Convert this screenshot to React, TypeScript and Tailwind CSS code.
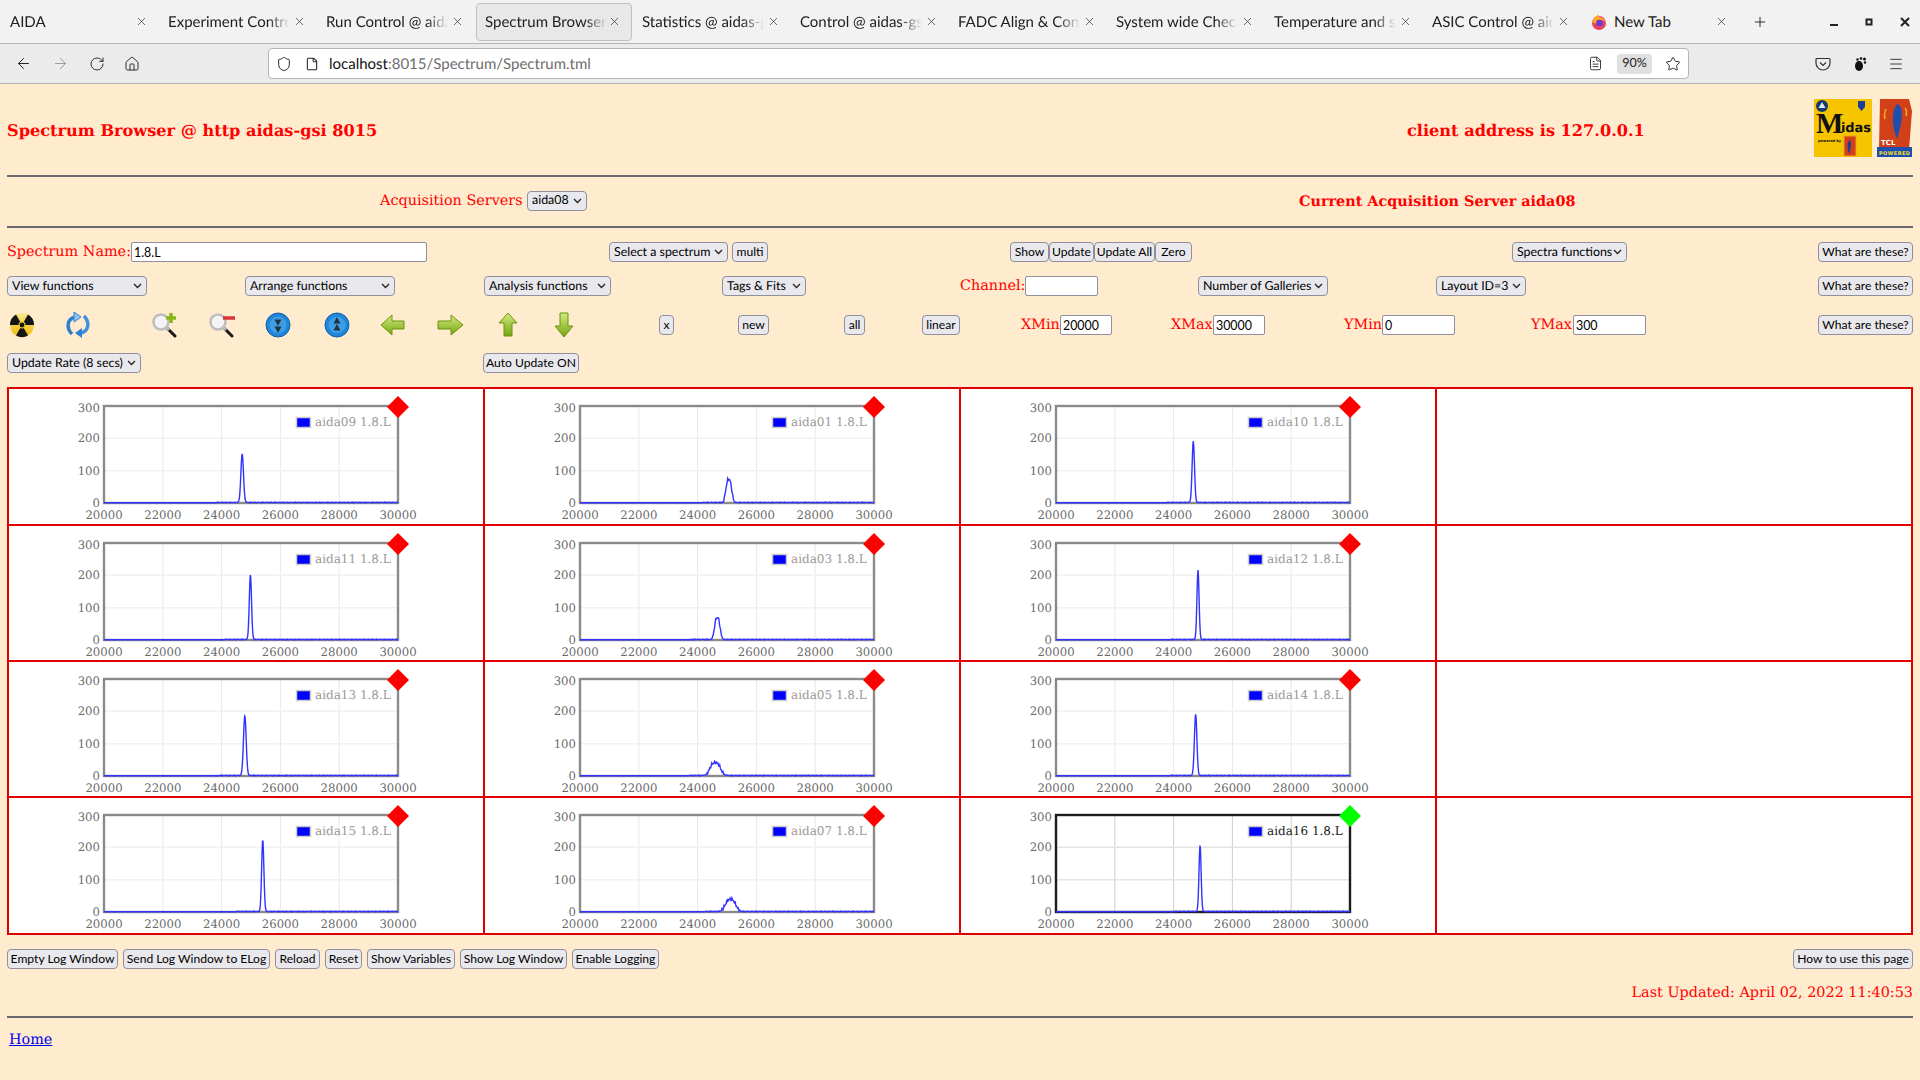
import { ReactNode } from 'react';
import { ArrowLeft, ArrowRight, RotateCw, Home, Shield, File, FileText, Star, Menu, Plus, X } from 'lucide-react';

const uiFont = 'font-["Lato",sans-serif]';
const pageFont = 'font-["DejaVu_Serif",serif]';
const label = 'shrink-0 pt-[2px] font-["DejaVu_Serif",serif] text-[14.4px] whitespace-nowrap text-[#ff0000]';

interface CtlProps {
    w: string;
    children: ReactNode;
}

function Btn({ w, children }: CtlProps) {
    return (
        <button className={`${w} block h-[20px] shrink-0 rounded-[4px] border border-[#8f8f9d] bg-[#e9e9ed] text-center text-[12.1px] leading-none whitespace-nowrap text-black`}>
            {children}
        </button>
    );
}

function Sel({ w, children }: CtlProps) {
    return (
        <div className={`${w} flex h-[20px] shrink-0 items-center justify-between rounded-[4px] border border-[#8f8f9d] bg-[#e9e9ed] pl-[4px] pr-[4px] text-[12.4px] whitespace-nowrap text-black`}>
            <span>{children}</span>
            <svg width="9" height="6" viewBox="0 0 9 6" fill="none" stroke="#222" strokeWidth="1.3">
                <path d="M1 1l3.500 3.500L8 1" />
            </svg>
        </div>
    );
}

function Field({ w, value }: { w: string; value?: string }) {
    return (
        <input
            type="text"
            readOnly
            value={value ?? ''}
            className={`${w} h-[20px] shrink-0 rounded-[2px] border border-[#8f8f9d] bg-white pl-[2px] text-[12.4px] text-black outline-none`}
        />
    );
}

function Rule() {
    return <div className="h-[2px] bg-[#6a6a6a]" />;
}

const tabs = [
    'AIDA',
    'Experiment Control @ aidas-gsi',
    'Run Control @ aidas-gsi',
    'Spectrum Browser @ aidas-gsi',
    'Statistics @ aidas-gsi',
    'Control @ aidas-gsi',
    'FADC Align & Control',
    'System wide Checks',
    'Temperature and status',
    'ASIC Control @ aidas-gsi',
];

function FirefoxIcon() {
    return (
        <svg width="16" height="16" viewBox="0 0 16 16">
            <circle cx="8" cy="9" r="7" fill="#e8415f" />
            <path d="M1.500 8C2 4 5 1.500 8 1c-.5 1.500 1 2.500 3 3 2 .6 3.600 2.500 4 5-1-2-3-3-5-3-2.500 0-4 2-3.500 4-1.500-.5-4-1-5.500-2z" fill="#fda429" />
            <circle cx="8.500" cy="9" r="3.300" fill="#6e3bd1" />
        </svg>
    );
}

function TabBar() {
    return (
        <div className="flex h-[44px] items-center border-b border-[#b4b4b4] bg-[#f2f2f2] pl-[2px] text-[15px] text-[#202020]">
            {tabs.map((t, i) => (
                <div
                    key={i}
                    className={`mr-[2px] flex h-[38px] w-[156px] shrink-0 items-center justify-between rounded-[4px] pl-[8px] pr-[10px] ${i === 3 ? 'border border-[#c0c0c0] bg-[#e8e8e8]' : ''}`}
                >
                    <span className="w-[122px] overflow-hidden pt-[2px] whitespace-nowrap [mask-image:linear-gradient(to_right,black_82%,transparent)]">{t}</span>
                    <X size={13} strokeWidth={1.2} className="shrink-0" />
                </div>
            ))}
            <div className="flex h-[38px] w-[160px] shrink-0 items-center pl-[9px] pr-[14px]">
                <FirefoxIcon />
                <span className="ml-[7px] pt-[2px]">New Tab</span>
                <X size={13} strokeWidth={1.2} className="ml-auto" />
            </div>
            <Plus size={16} strokeWidth={1.4} className="ml-[10px]" />
            <svg width="10" height="10" viewBox="0 0 10 10" className="ml-[61px]"><path d="M1 8h8" stroke="#222" strokeWidth="2" /></svg>
            <svg width="10" height="10" viewBox="0 0 10 10" className="ml-[25px]"><rect x="2.500" y="2.500" width="5" height="5" fill="none" stroke="#222" strokeWidth="2" /></svg>
            <svg width="10" height="10" viewBox="0 0 10 10" className="ml-[26px]"><path d="M1 1l8 8M9 1l-8 8" stroke="#222" strokeWidth="2" /></svg>
        </div>
    );
}

function NavBar() {
    return (
        <div className="flex h-[40px] items-center border-b border-[#b4b4b4] bg-[#ebebeb] pl-[15px] text-[#222]">
            <ArrowLeft size={17} strokeWidth={1.4} />
            <ArrowRight size={17} strokeWidth={1.4} className="ml-[20px] text-[#9a9a9a]" />
            <RotateCw size={16} strokeWidth={1.4} className="ml-[20px]" />
            <Home size={16} strokeWidth={1.4} className="ml-[19px]" />
            <div className="ml-[128px] flex h-[31px] w-[1421px] shrink-0 items-center rounded-[4px] border border-[#b5b5b5] bg-white pl-[7px] text-[15px]">
                <Shield size={16} strokeWidth={1.5} />
                <File size={14} strokeWidth={1.8} className="ml-[13px]" />
                <span className="ml-[10px] pt-[2px] text-[#111]">localhost<span className="text-[#6d6d6d]">:8015/Spectrum/Spectrum.tml</span></span>
                <FileText size={15} strokeWidth={1.4} className="ml-auto" />
                <span className="ml-[14px] flex h-[20px] w-[35px] items-center justify-center rounded-[3px] bg-[#e0e0e0] text-[12.5px]">90%</span>
                <Star size={16} strokeWidth={1.4} className="ml-[13px] mr-[7px]" />
            </div>
            <svg width="16" height="16" viewBox="0 0 16 16" fill="none" stroke="#333" strokeWidth="1.2" className="ml-[126px]">
                <path d="M2 2.500h12a1 1 0 0 1 1 1V7a7 7 0 0 1-14 0V3.500a1 1 0 0 1 1-1z" />
                <path d="M5 6.500l3 3 3-3" />
            </svg>
            <svg width="16" height="16" viewBox="0 0 16 16" className="ml-[21px]" fill="#111">
                <ellipse cx="7" cy="10" rx="4" ry="5" />
                <circle cx="12.500" cy="3" r="1.500" />
                <circle cx="9" cy="2.500" r="1.300" />
                <circle cx="5.500" cy="3.500" r="1.200" />
                <circle cx="13" cy="6.500" r="1.200" />
            </svg>
            <Menu size={16} strokeWidth={1.3} className="ml-[20px]" />
        </div>
    );
}

function Radiation() {
    return (
        <svg width="26" height="26" viewBox="0 0 26 26">
            <defs>
                <linearGradient id="nuke" x1="0" y1="0" x2="0" y2="1">
                    <stop offset="0" stopColor="#f7e88a" />
                    <stop offset="1" stopColor="#f2b90c" />
                </linearGradient>
            </defs>
            <circle cx="13" cy="13" r="12" fill="url(#nuke)" />
            <path d="M13 13L7 2.600A12 12 0 0 0 1 13zM13 13L25 13A12 12 0 0 0 19 2.600zM13 13L7 23.400A12 12 0 0 0 19 23.400z" fill="#151515" />
            <circle cx="13" cy="13" r="3.500" fill="#f2c81c" />
            <circle cx="13" cy="13" r="2.400" fill="#151515" />
        </svg>
    );
}

function Refresh() {
    return (
        <svg width="26" height="26" viewBox="0 0 26 26" fill="none">
            <path d="M7 22C1 16 2 7 10 5" stroke="#2f7fd0" strokeWidth="3.500" />
            <path d="M19 4c6 6 5 15-3 17" stroke="#3f8fe0" strokeWidth="3.500" />
            <path d="M9 0l7 5-7 5z" fill="#8fc4f2" stroke="#2f7fd0" />
            <path d="M17 16l-7 5 7 5z" fill="#2f7fd0" />
        </svg>
    );
}

function Magnifier({ plus }: { plus: boolean }) {
    return (
        <svg width="28" height="26" viewBox="0 0 28 26" fill="none">
            <path d="M15 15l9 9" stroke="#1a1a1a" strokeWidth="3" strokeLinecap="round" />
            <path d="M15 15l3 3" stroke="#bbb" strokeWidth="3" />
            <circle cx="10" cy="10" r="7.500" fill="#f4f4f4" stroke="#bdbdbd" strokeWidth="2.500" />
            {plus ? (
                <path d="M20 1v10M15 6h10" stroke="#86b81c" strokeWidth="3.500" />
            ) : (
                <path d="M15 6h12" stroke="#d8353a" strokeWidth="3.500" />
            )}
        </svg>
    );
}

function BlueRound({ up }: { up: boolean }) {
    return (
        <svg width="26" height="26" viewBox="0 0 26 26">
            <circle cx="13" cy="13" r="12" fill="#1f86d8" stroke="#125ea8" />
            <circle cx="13" cy="13" r="8.500" fill="#3d9ee6" />
            {up ? (
                <path d="M13 5l3.500 6.500h-7zM13 12l3.500 6.500h-7z" fill="#243340" />
            ) : (
                <path d="M13 21l3.500-6.500h-7zM13 14l3.500-6.500h-7z" fill="#243340" />
            )}
        </svg>
    );
}

function GreenArrow({ dir }: { dir: 'left' | 'right' | 'up' | 'down' }) {
    const paths = {
        left: 'M1 13L12 3v6h12v8H12v6z',
        right: 'M27 13L15 3v6H2v8h13v6z',
        up: 'M12 1L21 11h-5v13H8V11H3z',
        down: 'M12 25L21 14h-5V1H8v13H3z',
    };
    const horizontal = dir === 'left' || dir === 'right';
    return (
        <svg width={horizontal ? 28 : 24} height="26" viewBox={horizontal ? '0 0 28 26' : '0 0 24 26'}>
            <defs>
                <linearGradient id={`arrow-${dir}`} x1="0" y1="0" x2="0" y2="1">
                    <stop offset="0" stopColor="#d2ea82" />
                    <stop offset="1" stopColor="#76a60f" />
                </linearGradient>
            </defs>
            <path d={paths[dir]} fill={`url(#arrow-${dir})`} stroke="#6b960f" strokeWidth="1" />
        </svg>
    );
}

function Logos() {
    return (
        <div className="ml-auto flex shrink-0 items-start gap-[5px]">
            <svg width="58" height="58" viewBox="0 0 58 58">
                <rect width="58" height="58" fill="#f6c500" />
                <circle cx="8" cy="7" r="6" fill="#143a6e" />
                <path d="M8 3l3.500 6h-7z" fill="#dfe8f2" />
                <path d="M44 2h7v6l-3.500 4L44 8z" fill="#1c3f9c" />
                <text x="2" y="34" fontFamily="Liberation Serif, serif" fontSize="29" fontWeight="700" fill="#111">M</text>
                <text x="27" y="33" fontFamily="DejaVu Sans, sans-serif" fontSize="13" fontWeight="700" fill="#111" textLength="30">idas</text>
                <text x="4" y="43" fontFamily="DejaVu Sans, sans-serif" fontSize="3.500" fontWeight="700" fill="#111">powered by</text>
                <rect x="30" y="37" width="12" height="20" fill="#d2401a" stroke="#f0a020" />
                <path d="M35 41c3 2 2 7 0 14-2-5-2-10 0-14z" fill="#1c3f9c" />
            </svg>
            <svg width="36" height="58" viewBox="0 0 36 58">
                <path d="M3 0h29l3 12-3 39H2z" fill="#d2401a" />
                <path d="M20 5c8 3 5 18 0 35-5-12-6-27 0-35z" fill="#1f4fae" />
                <path d="M9 10c-2 4-2 6-1 10M28 9c2 2 2 4 1 8" stroke="#f2b020" strokeWidth="1.500" fill="none" />
                <text x="4" y="46" fontFamily="DejaVu Sans, sans-serif" fontSize="7" fontWeight="700" fill="#fff">TCL</text>
                <rect x="0" y="48" width="35" height="10" fill="#1f4fae" />
                <text x="2" y="55.500" fontFamily="DejaVu Sans, sans-serif" fontSize="5" fontWeight="700" fill="#f6e020" textLength="31">POWERED</text>
            </svg>
        </div>
    );
}

interface ChartDef {
    name: string;
    peak: number;
    height: number;
    sigma: number;
    broad?: boolean;
}

const charts: ChartDef[] = [
    { name: 'aida09', peak: 24700, height: 150, sigma: 44 },
    { name: 'aida01', peak: 25060, height: 72, sigma: 95, broad: true },
    { name: 'aida10', peak: 24670, height: 190, sigma: 40 },
    { name: 'aida11', peak: 24980, height: 200, sigma: 38 },
    { name: 'aida03', peak: 24670, height: 68, sigma: 90, broad: true },
    { name: 'aida12', peak: 24830, height: 215, sigma: 36 },
    { name: 'aida13', peak: 24790, height: 185, sigma: 46 },
    { name: 'aida05', peak: 24600, height: 40, sigma: 170, broad: true },
    { name: 'aida14', peak: 24750, height: 190, sigma: 42 },
    { name: 'aida15', peak: 25400, height: 222, sigma: 38 },
    { name: 'aida07', peak: 25120, height: 38, sigma: 170, broad: true },
    { name: 'aida16', peak: 24900, height: 205, sigma: 36 },
];

const plotL = 95;
const plotR = 389;
const plotT = 17;
const plotB = 114;

function sx(ch: number) {
    return plotL + ((ch - 20000) / 10000) * (plotR - plotL);
}

function sy(v: number) {
    return plotB - (v / 300) * (plotB - plotT);
}

function spectrumPath(c: ChartDef, seed: number) {
    let d = '';
    for (let ch = 20000; ch <= 30000; ch += 16) {
        const u = (ch - c.peak) / c.sigma;
        let v = c.height * Math.exp(c.broad ? -Math.pow(Math.abs(u), 2.6) / 2 : -(u * u) / 2);
        const wobble = Math.sin(ch * 0.37 + seed) * Math.sin(ch * 0.091 + seed * 2);
        if (c.broad && v > 5) {
            v += wobble * 5;
        }
        v += ch > c.peak - 900 ? Math.abs(wobble) * 1.5 : 0;
        d += `${ch === 20000 ? 'M' : 'L'}${sx(ch).toFixed(2)} ${sy(v + 1).toFixed(2)}`;
    }
    return d;
}

function Chart({ chart, index }: { chart: ChartDef; index: number }) {
    const active = chart.name === 'aida16';
    const grid = active ? '#cfcfcf' : '#e8e8e8';
    const gridH = active ? '#e4e4e4' : '#f1f1f1';
    return (
        <svg width="474" height="134" viewBox="0 0 474 134" className={pageFont}>
            {[22000, 24000, 26000, 28000].map((ch) => (
                <line key={ch} x1={sx(ch)} x2={sx(ch)} y1={plotT} y2={plotB} stroke={grid} strokeWidth="1" />
            ))}
            {[100, 200].map((v) => (
                <line key={v} x1={plotL} x2={plotR} y1={sy(v)} y2={sy(v)} stroke={gridH} strokeWidth="1.500" />
            ))}
            <rect x={plotL} y={plotT} width={plotR - plotL} height={plotB - plotT} fill="none" stroke={active ? '#1c1c1c' : '#8a8a8a'} strokeWidth="2.400" />
            <path d={spectrumPath(chart, index)} fill="none" stroke="#3333ff" strokeWidth="1.400" />
            {[0, 100, 200, 300].map((v) => (
                <text key={v} x={plotL - 4} y={sy(v) + (v === 300 ? 6 : 4)} textAnchor="end" fontSize="11.700" fill="#6a6a6a">{v}</text>
            ))}
            {[20000, 22000, 24000, 26000, 28000, 30000].map((ch) => (
                <text key={ch} x={sx(ch)} y={129.500} textAnchor="middle" fontSize="11.700" fill="#6a6a6a">{ch}</text>
            ))}
            <rect x="287.500" y="28.500" width="14" height="10" fill="#00f" stroke="#ccc" strokeWidth="1.500" />
            <text x="306" y="37" fontSize="12" fill={active ? '#222' : '#999'}>{chart.name} 1.8.L</text>
            <path d={`M${plotR} 7L${plotR + 11} 18L${plotR} 29L${plotR - 11} 18z`} fill={active ? '#00ff00' : '#ff0000'} />
        </svg>
    );
}

function ChartTable() {
    const cells = [];
    for (let r = 0; r < 4; r++) {
        for (let c = 0; c < 4; c++) {
            const chart = c < 3 ? charts[r * 3 + c] : null;
            cells.push(
                <div key={`${r}-${c}`} className="overflow-visible border-r-2 border-b-2 border-[#e00000] bg-white">
                    {chart && <Chart chart={chart} index={r * 3 + c} />}
                </div>,
            );
        }
    }
    return (
        <div className="mt-[14px] grid grid-cols-[repeat(4,476px)] grid-rows-[137px_136px_136px_137px] border-t-2 border-l-2 border-[#e00000]">
            {cells}
        </div>
    );
}

export default function App() {
    return (
        <div className={`h-[1080px] w-[1920px] overflow-hidden bg-[#ffebcd] [text-rendering:geometricPrecision] ${uiFont}`}>
            <TabBar />
            <NavBar />
            <div className="px-[7px]">
                <div className={`flex h-[91px] items-start pt-[15px] ${pageFont} text-[16.15px] font-bold text-[#ff0000]`}>
                    <span className="mt-[20px] w-[1400px] shrink-0">Spectrum Browser @ http aidas-gsi 8015</span>
                    <span className="mt-[20px]">client address is 127.0.0.1</span>
                    <Logos />
                </div>
                <Rule />
                <div className="flex h-[47px] items-center">
                    <span className={`ml-[373px] w-[142px] ${label}`}>Acquisition Servers</span>
                    <div className="ml-[5px]"><Sel w="w-[60px]">aida08</Sel></div>
                    <span className={`ml-[712px] ${label} font-bold`}>Current Acquisition Server aida08</span>
                </div>
                <div className="mt-[2px]"><Rule /></div>

                <div className="mt-[14px] flex h-[20px] items-center">
                    <span className={`w-[124px] ${label}`}>Spectrum Name:</span>
                    <Field w="w-[296px]" value="1.8.L" />
                    <div className="ml-[182px]"><Sel w="w-[119px]">Select a spectrum</Sel></div>
                    <div className="ml-[4px]"><Btn w="w-[36px]">multi</Btn></div>
                    <div className="ml-[242px] flex">
                        <Btn w="w-[39px]">Show</Btn>
                        <Btn w="w-[45px]">Update</Btn>
                        <Btn w="w-[61px]">Update All</Btn>
                        <Btn w="w-[37px]">Zero</Btn>
                    </div>
                    <div className="ml-[320px]"><Sel w="w-[115px]">Spectra functions</Sel></div>
                    <div className="ml-[191px]"><Btn w="w-[95px]">What are these?</Btn></div>
                </div>

                <div className="mt-[14px] flex h-[20px] items-center">
                    <Sel w="w-[140px]">View functions</Sel>
                    <div className="ml-[98px]"><Sel w="w-[150px]">Arrange functions</Sel></div>
                    <div className="ml-[89px]"><Sel w="w-[127px]">Analysis functions</Sel></div>
                    <div className="ml-[111px]"><Sel w="w-[84px]">Tags &amp; Fits</Sel></div>
                    <span className={`ml-[154px] w-[65px] ${label}`}>Channel:</span>
                    <Field w="w-[73px]" />
                    <div className="ml-[100px]"><Sel w="w-[130px]">Number of Galleries</Sel></div>
                    <div className="ml-[108px]"><Sel w="w-[90px]">Layout ID=3</Sel></div>
                    <div className="ml-[292px]"><Btn w="w-[95px]">What are these?</Btn></div>
                </div>

                <div className="mt-[19px] flex h-[20px] items-center">
                    <div className="ml-[2px] w-[56px] shrink-0"><Radiation /></div>
                    <div className="w-[86px] shrink-0"><Refresh /></div>
                    <div className="w-[57px] shrink-0"><Magnifier plus /></div>
                    <div className="w-[57px] shrink-0"><Magnifier plus={false} /></div>
                    <div className="w-[59px] shrink-0"><BlueRound up={false} /></div>
                    <div className="w-[56px] shrink-0"><BlueRound up /></div>
                    <div className="w-[56px] shrink-0"><GreenArrow dir="left" /></div>
                    <div className="w-[60px] shrink-0"><GreenArrow dir="right" /></div>
                    <div className="w-[56px] shrink-0"><GreenArrow dir="up" /></div>
                    <div className="w-[25px] shrink-0"><GreenArrow dir="down" /></div>
                    <div className="ml-[82px]"><Btn w="w-[15px]">x</Btn></div>
                    <div className="ml-[64px]"><Btn w="w-[31px]">new</Btn></div>
                    <div className="ml-[75px]"><Btn w="w-[21px]">all</Btn></div>
                    <div className="ml-[57px]"><Btn w="w-[38px]">linear</Btn></div>
                    <span className={`ml-[61px] w-[39px] ${label}`}>XMin</span>
                    <Field w="w-[52px]" value="20000" />
                    <span className={`ml-[59px] w-[42px] ${label}`}>XMax</span>
                    <Field w="w-[52px]" value="30000" />
                    <span className={`ml-[79px] w-[38px] ${label}`}>YMin</span>
                    <Field w="w-[73px]" value="0" />
                    <span className={`ml-[76px] w-[42px] ${label}`}>YMax</span>
                    <Field w="w-[73px]" value="300" />
                    <div className="ml-[172px]"><Btn w="w-[95px]">What are these?</Btn></div>
                </div>

                <div className="mt-[18px] flex h-[20px] items-center">
                    <Sel w="w-[134px]">Update Rate (8 secs)</Sel>
                    <div className="ml-[342px]"><Btn w="w-[96px]">Auto Update ON</Btn></div>
                </div>

                <ChartTable />

                <div className="mt-[14px] flex h-[20px] items-center gap-[5px]">
                    <Btn w="w-[111px]">Empty Log Window</Btn>
                    <Btn w="w-[147px]">Send Log Window to ELog</Btn>
                    <Btn w="w-[45px]">Reload</Btn>
                    <Btn w="w-[37px]">Reset</Btn>
                    <Btn w="w-[88px]">Show Variables</Btn>
                    <Btn w="w-[107px]">Show Log Window</Btn>
                    <Btn w="w-[87px]">Enable Logging</Btn>
                    <div className="ml-auto"><Btn w="w-[120px]">How to use this page</Btn></div>
                </div>

                <div className={`mt-[14px] h-[20px] text-right ${pageFont} text-[14.4px] text-[#ff0000]`}>Last Updated: April 02, 2022 11:40:53</div>
                <div className="mt-[13px]"><Rule /></div>
                <a href="#" className={`mt-[12px] ml-[2px] inline-block ${pageFont} text-[14.4px] text-[#0000ee] underline`}>Home</a>
            </div>
        </div>
    );
}
